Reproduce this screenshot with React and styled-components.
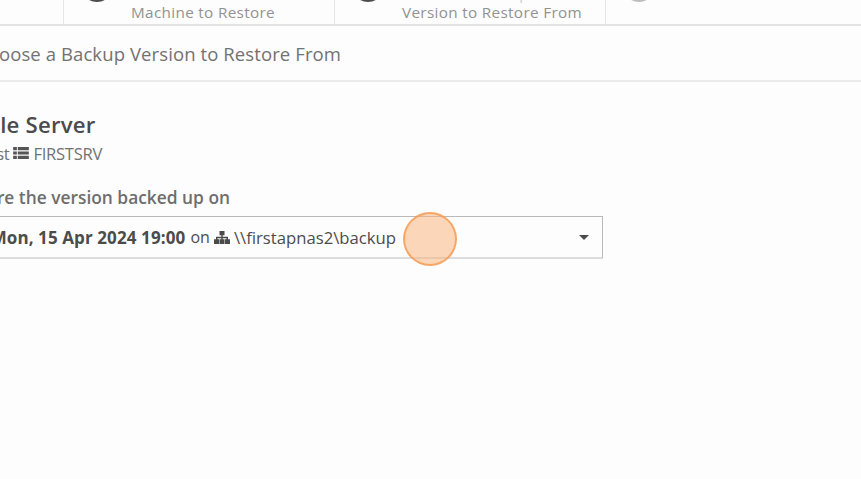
import React from "react";
import styled, { createGlobalStyle } from "styled-components";

const GlobalStyle = createGlobalStyle`
  * { box-sizing: border-box; }
  body { margin: 0; background: #fdfdfd; font-family: "Open Sans", sans-serif; overflow: hidden; }
`;

const Page = styled.main`
  width: 861px;
  height: 479px;
  overflow: hidden;
  background: #fdfdfd;
`;

const Steps = styled.nav`
  display: grid;
  grid-template-columns: 64px 271px 271px 1fr;
  height: 26px;
  border-bottom: 2px solid #e3e3e3;
`;

const Step = styled.div`
  display: flex;
  align-items: flex-end;
  justify-content: ${(p) => (p.$cut ? "flex-end" : "flex-start")};
  height: 24px;
  overflow: hidden;
  padding: ${(p) => (p.$cut ? "0 30px 0 0" : "0 0 0 17px")};
  border-right: ${(p) => (p.$last ? "0" : "1px solid #e6e6e6")};
`;

const StepDot = styled.span`
  flex: none;
  width: 32px;
  height: 32px;
  margin: 0 18px 22px 0;
  border-radius: 50%;
  background: ${(p) => (p.$pending ? "#bdbdbd" : "#4d4d4f")};
`;

const StepText = styled.div`
  flex: none;
  height: 40px;
  font-size: 15.3px;
  line-height: 19px;
  letter-spacing: 0.32px;
  color: #929292;
  white-space: nowrap;

  &::first-line {
    color: #cfcfcf;
  }
`;

const TitleBar = styled.header`
  display: flex;
  align-items: center;
  justify-content: flex-end;
  width: 861px;
  height: 56px;
  padding: 2px 520px 0 0;
  border-bottom: 2px solid #ebebeb;
`;

const Title = styled.h1`
  margin: 0;
  font-size: 18.5px;
  font-weight: 400;
  line-height: 24px;
  letter-spacing: 0.1px;
  color: #727272;
  white-space: nowrap;
`;

const Line = styled.div`
  display: flex;
  align-items: center;
  justify-content: flex-end;
  width: ${(p) => p.$end}px;
  height: ${(p) => p.$height}px;
  margin-top: ${(p) => p.$gap}px;
  font-size: ${(p) => p.$size}px;
  font-weight: ${(p) => p.$weight ?? 400};
  letter-spacing: ${(p) => p.$track ?? 0}px;
  color: ${(p) => p.$color};
  white-space: pre;
`;

const Select = styled.div`
  position: relative;
  display: flex;
  align-items: center;
  justify-content: space-between;
  width: 603px;
  height: 43px;
  margin-top: 7px;
  padding-right: 13px;
  border: 1px solid #b9b9b9;
  border-bottom: 2px solid #dcdcdc;
  border-left: 0;
`;

const Value = styled.div`
  display: flex;
  align-items: center;
  justify-content: flex-end;
  width: 396px;
  font-size: 16.7px;
  color: #4c4c4c;
  white-space: pre;
`;

const Stamp = styled.strong`
  margin-right: 1px;
  font-weight: 700;
  font-size: 17px;
  letter-spacing: 0.1px;
`;

const Joiner = styled.span`
  font-size: 16px;
`;

const Icon = styled.svg`
  flex: none;
  display: block;
  margin: 0 4px;
`;

const ClickMark = styled.span`
  position: absolute;
  left: 402.7px;
  top: -4.7px;
  width: 54px;
  height: 54px;
  border: 2px solid rgba(245, 150, 75, 0.75);
  border-radius: 50%;
  background: rgba(251, 178, 120, 0.52);
`;

export default function App() {
  return (
    <Page>
      <GlobalStyle />
      <Steps>
        <Step $cut>
          <StepText>Restore</StepText>
        </Step>
        <Step>
          <StepDot />
          <StepText>Choose a Source<br />Machine to Restore</StepText>
        </Step>
        <Step>
          <StepDot />
          <StepText>Choose a Backup<br />Version to Restore From</StepText>
        </Step>
        <Step $last>
          <StepDot $pending />
          <StepText>Confirm Restore</StepText>
        </Step>
      </Steps>
      <TitleBar>
        <Title>Choose a Backup Version to Restore From</Title>
      </TitleBar>
      <Line $end={95.5} $height={30} $gap={27} $size={22.2} $track={0.2} $weight={600} $color="#4b4b4d">File Server</Line>
      <Line $end={102} $height={22} $gap={3} $size={16.6} $track={-0.3} $color="#727272">
        Host
        <Icon width="16" height="12" viewBox="0 0 17 13" fill="#555">
          <path d="M0 0h4v3.5H0zM5 0h12v3.5H5zM0 4.8h4v3.4H0zM5 4.8h12v3.4H5zM0 9.5h4V13H0zM5 9.5h12V13H5z" />
        </Icon>
        FIRSTSRV
      </Line>
      <Line $end={230} $height={24} $gap={21} $size={17.35} $weight={600} $color="#6e6e6e">Restore the version backed up on</Line>
      <Select>
        <Value>
          <Stamp>Mon, 15 Apr 2024 19:00</Stamp>
          <Joiner> on</Joiner>
          <Icon width="16" height="13" viewBox="0 0 16 14" preserveAspectRatio="none" fill="#4a4a4a">
            <path d="M5.5 0h5v4.5H8.7v1.7H14V9h2v5h-5V9h1.5V7.7H8.7V9h1.8v5h-5V9h1.8V7.7H3.5V9H5v5H0V9h2V6.2h5.3V4.5H5.5z" />
          </Icon>
          \\firstapnas2\backup
        </Value>
        <svg width="10" height="5" viewBox="0 0 10 5" fill="#4a4a4a"><path d="M0 0h10L5 5z" /></svg>
        <ClickMark />
      </Select>
    </Page>
  );
}
